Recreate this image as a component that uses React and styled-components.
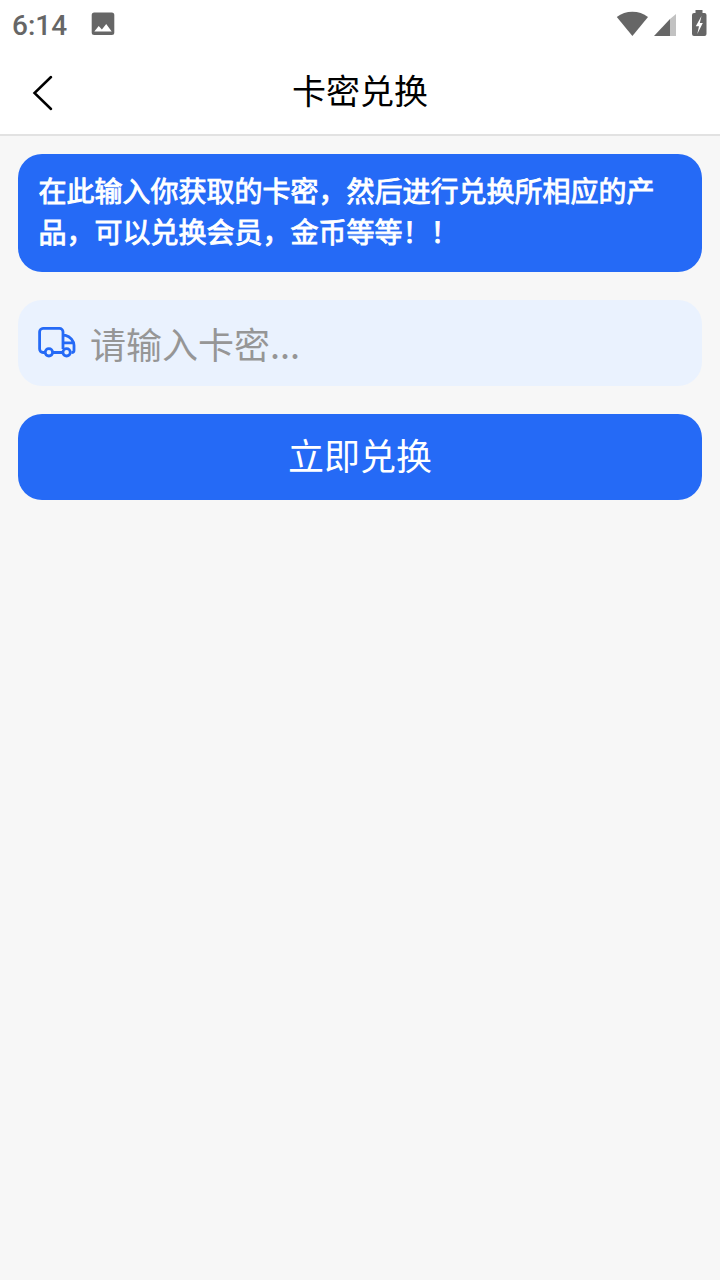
import React, { useState } from 'react';
import styled, { createGlobalStyle } from 'styled-components';

const GlobalStyle = createGlobalStyle`
  * {
    box-sizing: border-box;
  }
  body {
    margin: 0;
    background: #f7f7f7;
    font-family: 'Noto Sans CJK SC', sans-serif;
  }
`;

const Page = styled.div`
  min-height: 100vh;
  display: flex;
  flex-direction: column;
  background: #f7f7f7;
`;

const StatusBar = styled.div`
  height: 48px;
  padding: 0 13px 0 12px;
  display: flex;
  align-items: center;
  justify-content: space-between;
  background: #fff;
  color: #666;
`;

const StatusGroup = styled.div`
  display: flex;
  align-items: center;
  height: 48px;
`;

const Clock = styled.span`
  width: 79px;
  padding-top: 3px;
  font: 500 28px/32px Roboto, sans-serif;
`;

const Header = styled.header`
  height: 88px;
  padding: 0 28px;
  display: grid;
  grid-template-columns: 32px 1fr 32px;
  align-items: center;
  background: #fff;
  border-bottom: 2px solid #e2e2e2;
`;

const BackButton = styled.button`
  padding: 4px 0 0;
  border: 0;
  background: none;
  display: flex;
`;

const Title = styled.h1`
  margin: 0;
  padding-bottom: 2px;
  font-size: 34px;
  font-weight: 400;
  line-height: 48px;
  text-align: center;
  color: #000;
`;

const Content = styled.main`
  padding: 18px;
  display: flex;
  flex-direction: column;
  gap: 28px;
`;

const Notice = styled.p`
  margin: 0;
  height: 118px;
  padding: 16px 19px 16px 20.5px;
  border-radius: 24px;
  background: #256af6;
  color: #fff;
  font-size: 28px;
  line-height: 41px;
  -webkit-text-stroke: 0.9px #fff;
`;

const Field = styled.label`
  height: 86px;
  padding: 0 20px;
  display: flex;
  align-items: center;
  gap: 14px;
  border-radius: 24px;
  background: #eaf2fe;
`;

const Input = styled.input`
  flex: 1;
  min-width: 0;
  height: 60px;
  padding: 0;
  border: 0;
  outline: 0;
  background: none;
  color: #222;
  font: 400 36px 'Noto Sans CJK SC', sans-serif;
  &::placeholder {
    color: #969696;
    opacity: 1;
  }
`;

const SubmitButton = styled.button`
  height: 86px;
  padding: 0 0 6px;
  border: 0;
  border-radius: 24px;
  background: #256af6;
  color: #fff;
  font: 400 36px 'Noto Sans CJK SC', sans-serif;
`;

const PictureIcon = () => (
  <svg width="24" height="24" viewBox="0 0 24 24">
    <path
      fill="#666"
      fillRule="evenodd"
      d="M3.2 .5h17.600a2.500 2.500 0 0 1 2.500 2.500v17.600a2.500 2.500 0 0 1-2.500 2.500H3.200a2.500 2.500 0 0 1-2.500-2.500V3A2.500 2.500 0 0 1 3.200 .5ZM3.300 19.400h17.400L15.200 12l-4.300 5.600-3.200-3.700Z"
    />
  </svg>
);

const SignalIcons = () => (
  <svg width="92" height="48" viewBox="0 0 92 48" fill="#666">
    <path d="M1.8 17C10.5 10 24.3 10 33 17L17.4 36Z" />
    <path fill="#c2c2c2" d="M55 19l6-5v22h-6Z" />
    <path d="M39 36l16-17v17Z" />
    <path
      fillRule="evenodd"
      d="M80.5 10h7v3h2a2 2 0 0 1 2 2v19a2 2 0 0 1-2 2H79a2 2 0 0 1-2-2V15a2 2 0 0 1 2-2h1.500ZM86.500 16l-5.700 10.200h3.200L82.300 34l5.500-11h-3Z"
    />
  </svg>
);

const BackIcon = () => (
  <svg width="28" height="38" viewBox="0 0 28 38">
    <path d="M23 3L6.500 19l16.500 16" fill="none" stroke="#000" strokeWidth="2.500" strokeLinecap="round" />
  </svg>
);

const TruckIcon = () => (
  <svg width="38" height="32" viewBox="0 0 38 32" fill="none" stroke="#256af6" strokeWidth="2.800">
    <path d="M6.800 25.500H5A3.500 3.500 0 0 1 1.600 22V4.800A3.500 3.500 0 0 1 5 1.400h16.500A3.500 3.500 0 0 1 25 4.800v17.200M14.800 25.500H25" />
    <path d="M25 8.300h2.500c4.700 1.200 8.500 5.700 8.500 10V23.500q0 2-2.500 2M25 15.800h10.500" />
    <circle cx="10.900" cy="25.300" r="3.700" />
    <circle cx="28.600" cy="25.300" r="3.700" />
  </svg>
);

const App = () => {
  const [code, setCode] = useState('');

  return (
    <Page>
      <GlobalStyle />
      <StatusBar>
        <StatusGroup>
          <Clock>6:14</Clock>
          <PictureIcon />
        </StatusGroup>
        <StatusGroup>
          <SignalIcons />
        </StatusGroup>
      </StatusBar>
      <Header>
        <BackButton type="button">
          <BackIcon />
        </BackButton>
        <Title>卡密兑换</Title>
      </Header>
      <Content>
        <Notice>在此输入你获取的卡密，然后进行兑换所相应的产品，可以兑换会员，金币等等！！</Notice>
        <Field>
          <TruckIcon />
          <Input
            value={code}
            onChange={(e) => setCode(e.target.value)}
            placeholder="请输入卡密..."
          />
        </Field>
        <SubmitButton type="button">立即兑换</SubmitButton>
      </Content>
    </Page>
  );
};

export default App;
